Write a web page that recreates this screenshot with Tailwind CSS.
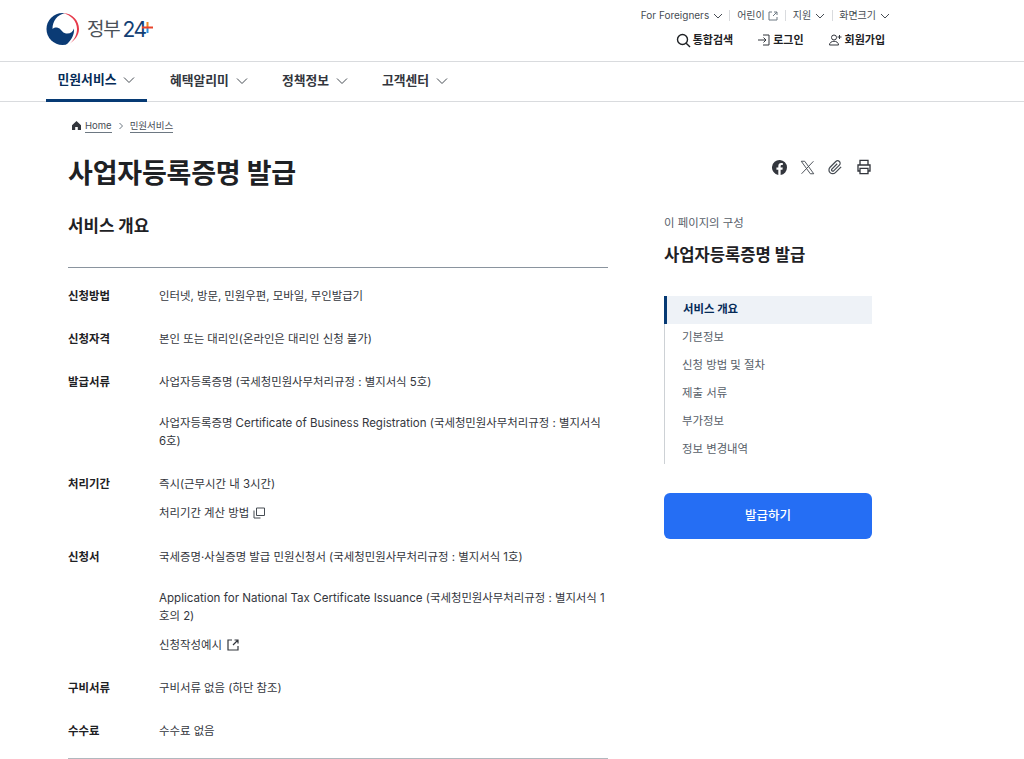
<!DOCTYPE html>
<html lang="ko">

<head>
    <meta charset="UTF-8">
    <title>사업자등록증명 발급 | 정부24</title>
    <script src="https://cdn.jsdelivr.net/npm/@tailwindcss/browser@4"></script>
</head>

<body class="bg-white text-[#1e2124] font-['Inter','Noto_Sans_CJK_KR',sans-serif] h-[759px] overflow-hidden">
    <!-- top header -->
    <header class="h-[62px] border-b border-[#d9dbde] px-[46px] flex justify-between">
        <a class="flex items-center gap-[7px] h-[58px]">
            <svg width="34" height="32" viewBox="0 0 34 32">
                <circle cx="16.500" cy="16" r="16" fill="#0b3b75" />
                <path d="M6.500 16C6.500 8 11 2 19 0H34V32H20C26 27 28.500 21 28 15.500C27 19 24 21 20 20.500C16 20 15 15 11 14.500C9 14.300 7 15 6.500 16Z" fill="#fff" />
                <path d="M17 0.200C27 0.200 33 8 33 16C33 22 29 27 24 30.500C29 26 31 21 31 16C31 8 25 2 17 0.200Z" fill="#e63a4b" />
            </svg>
            <span class="flex items-center leading-none text-[#4b5158]">
                <span class="text-[19px] tracking-[-1.200px]">정부</span>
                <span class="relative ml-[3px] text-[#123f75] text-[21px] tracking-[-1.500px]">24<svg class="absolute right-[-7px] top-[3px]" width="11" height="11" viewBox="0 0 11 11"><rect x="4.500" y="0" width="2" height="5" fill="#f08a24" /><rect x="4.500" y="5" width="2" height="6" fill="#2f8fdc" /><rect x="0" y="4.500" width="11" height="2" fill="#e8452c" /></svg></span>
            </span>
        </a>
        <div class="mr-[88px] flex flex-col items-end">
            <ul class="flex items-center h-[15px] mt-[8px] text-[10px] text-[#464c53]">
                <li class="flex items-center gap-[4px] pr-[6px]">For Foreigners
                    <svg width="10" height="10" viewBox="0 0 10 10" fill="none" stroke="#464c53"><path d="M1 3l4 4 4-4" /></svg>
                </li>
                <li class="flex items-center gap-[3px] border-l border-[#d9dbde] px-[7px] h-[11px]">어린이
                    <svg width="10" height="10" viewBox="0 0 10 10" fill="none" stroke="#6d7882"><path d="M4 1H1v8h8V6M5 5l4-4M6 1h3v3" /></svg>
                </li>
                <li class="flex items-center gap-[4px] border-l border-[#d9dbde] px-[7px] h-[11px]">지원
                    <svg width="10" height="10" viewBox="0 0 10 10" fill="none" stroke="#464c53"><path d="M1 3l4 4 4-4" /></svg>
                </li>
                <li class="flex items-center gap-[4px] border-l border-[#d9dbde] pl-[6px] h-[11px]">화면크기
                    <svg width="10" height="10" viewBox="0 0 10 10" fill="none" stroke="#464c53"><path d="M1 3l4 4 4-4" /></svg>
                </li>
            </ul>
            <ul class="flex items-center gap-[25px] mt-[9px] mr-[5px] text-[11px] font-bold text-[#1e2124]">
                <li class="flex items-center gap-[2px]">
                    <svg width="15" height="15" viewBox="0 0 15 15" fill="none" stroke="#1e2124" stroke-width="1.400"><circle cx="6.500" cy="6.500" r="5" /><path d="M10.200 10.200l3.800 3.800" /></svg>
                    통합검색
                </li>
                <li class="flex items-center gap-[3px]">
                    <svg width="12" height="12" viewBox="0 0 12 12" fill="none" stroke="#33363d"><path d="M5 1h6v10H5M0 6h8M5.500 3.500L8 6 5.500 8.500" /></svg>
                    로그인
                </li>
                <li class="flex items-center gap-[3px]">
                    <svg width="13" height="12" viewBox="0 0 13 12" fill="none" stroke="#33363d"><circle cx="5" cy="3.500" r="2.500" /><path d="M0.500 11c0-5 9-5 9 0zM10.500 1v4M8.500 3h4" /></svg>
                    회원가입
                </li>
            </ul>
        </div>
    </header>

    <!-- main nav -->
    <nav class="h-[40px] border-b border-[#d9dbde] px-[46px] flex text-[12.800px] font-semibold text-[#33363d]">
        <a class="h-[40px] w-[101px] border-b-[3px] border-[#063a74] flex items-center justify-center gap-[7px] text-[#052b57] pb-[1px]">민원서비스
            <svg width="12" height="12" viewBox="0 0 12 12" fill="none" stroke="#464c53"><path d="M1 3.500l5 5 5-5" /></svg>
        </a>
        <a class="flex items-center gap-[7px] ml-[23px] pb-[1px]">혜택알리미
            <svg width="12" height="12" viewBox="0 0 12 12" fill="none" stroke="#464c53"><path d="M1 3.500l5 5 5-5" /></svg>
        </a>
        <a class="flex items-center gap-[7px] ml-[34px] pb-[1px]">정책정보
            <svg width="12" height="12" viewBox="0 0 12 12" fill="none" stroke="#464c53"><path d="M1 3.500l5 5 5-5" /></svg>
        </a>
        <a class="flex items-center gap-[7px] ml-[34px] pb-[1px]">고객센터
            <svg width="12" height="12" viewBox="0 0 12 12" fill="none" stroke="#464c53"><path d="M1 3.500l5 5 5-5" /></svg>
        </a>
    </nav>

    <div class="px-[68px] w-[940px]">
        <!-- breadcrumb -->
        <div class="flex items-center h-[15px] mt-[16px] ml-[4px] text-[9.500px] text-[#464c53]">
            <svg width="9" height="9" viewBox="0 0 9 9" fill="#33363d"><path d="M4.500 0L9 4.200V9H5.800V6H3.200v3H0V4.200z" /></svg>
            <a class="ml-[4px] border-b border-[#6d7882] leading-[13px]">Home</a>
            <svg class="mx-[6px]" width="6" height="8" viewBox="0 0 6 8" fill="none" stroke="#6d7882"><path d="M1.500 1l3 3-3 3" /></svg>
            <a class="border-b border-[#6d7882] leading-[13px]">민원서비스</a>
        </div>

        <!-- title -->
        <div class="flex justify-between items-center mt-[23px] h-[36px]">
            <h1 class="text-[27px] font-bold tracking-[-0.2px] text-[#1e2124] leading-[36px]">사업자등록증명 발급</h1>
            <div class="flex items-center gap-[13px] mb-[14px]">
                <svg width="15" height="15" viewBox="0 0 24 24" fill="#33363d"><path d="M24 12a12 12 0 1 0-13.900 11.900v-8.400H7.100V12h3V9.400c0-3 1.800-4.700 4.500-4.700 1.300 0 2.700.2 2.700.2v3h-1.500c-1.500 0-2 .9-2 1.900V12h3.400l-.5 3.500h-2.900v8.400A12 12 0 0 0 24 12z" /></svg>
                <svg width="15" height="15" viewBox="0 0 24 24" fill="none" stroke="#464c53" stroke-width="1.500"><path d="M2 2l14.500 20H22L7.500 2zM21.500 2L2.500 22" /></svg>
                <svg width="15" height="15" viewBox="0 0 24 24" fill="none" stroke="#464c53" stroke-width="2"><path d="M21 11l-9.200 9.200a6 6 0 0 1-8.500-8.500l9.200-9.200a4 4 0 0 1 5.700 5.700l-9.200 9.200a2 2 0 0 1-2.800-2.800l8.500-8.500" /></svg>
                <svg width="16" height="16" viewBox="0 0 24 24" fill="none" stroke="#33363d" stroke-width="2"><path d="M6 9V2h12v7M6 18H3v-9h18v9h-3M6 14h12v8H6z" /></svg>
            </div>
        </div>

        <div class="flex justify-between">
            <!-- content -->
            <main class="w-[540px]">
                <h2 class="text-[16.800px] font-bold leading-[22px] mt-[23px] pb-[30px] border-b border-[#8a949e]">서비스 개요</h2>
                <dl class="text-[11.400px] leading-[18px] text-[#33363d] border-b border-[#b1b8be] pb-[18px]">
                    <div class="flex mt-[19px]">
                        <dt class="w-[91px] font-bold text-[#1e2124]">신청방법</dt>
                        <dd>인터넷, 방문, 민원우편, 모바일, 무인발급기</dd>
                    </div>
                    <div class="flex mt-[25px]">
                        <dt class="w-[91px] font-bold text-[#1e2124]">신청자격</dt>
                        <dd>본인 또는 대리인(온라인은 대리인 신청 불가)</dd>
                    </div>
                    <div class="flex mt-[25px]">
                        <dt class="w-[91px] shrink-0 font-bold text-[#1e2124]">발급서류</dt>
                        <dd>
                            <p>사업자등록증명 (국세청민원사무처리규정 : 별지서식 5호)</p>
                            <p class="mt-[23px]">사업자등록증명 <span class="text-[11.500px]">Certificate of Business Registration</span> (국세청민원사무처리규정 : 별지서식 6호)</p>
                        </dd>
                    </div>
                    <div class="flex mt-[25px]">
                        <dt class="w-[91px] font-bold text-[#1e2124]">처리기간</dt>
                        <dd>
                            <p>즉시(근무시간 내 3시간)</p>
                            <p class="mt-[11px] flex items-center gap-[4px]">처리기간 계산 방법
                                <svg width="12" height="12" viewBox="0 0 12 12" fill="none" stroke="#464c53"><path d="M3.500 1h8v7.500h-8zM1 3.500V11h6.500" /></svg>
                            </p>
                        </dd>
                    </div>
                    <div class="flex mt-[26px]">
                        <dt class="w-[91px] shrink-0 font-bold text-[#1e2124]">신청서</dt>
                        <dd>
                            <p>국세증명·사실증명 발급 민원신청서 (국세청민원사무처리규정 : 별지서식 1호)</p>
                            <p class="mt-[23px]"><span class="text-[11.600px]">Application for National Tax Certificate Issuance</span> (국세청민원사무처리규정 : 별지서식 1호의 2)</p>
                            <p class="mt-[11px] flex items-center gap-[5px]">신청작성예시
                                <svg width="12" height="12" viewBox="0 0 12 12" fill="none" stroke="#33363d" stroke-width="1.200"><path d="M5 1H1v10h10V7M6 6l5-5M7.500 1H11v3.500" /></svg>
                            </p>
                        </dd>
                    </div>
                    <div class="flex mt-[25px]">
                        <dt class="w-[91px] font-bold text-[#1e2124]">구비서류</dt>
                        <dd>구비서류 없음 (하단 참조)</dd>
                    </div>
                    <div class="flex mt-[25px]">
                        <dt class="w-[91px] font-bold text-[#1e2124]">수수료</dt>
                        <dd>수수료 없음</dd>
                    </div>
                </dl>
            </main>

            <!-- side menu -->
            <aside class="w-[208px] mt-[24px]">
                <p class="text-[11.400px] leading-[14px] text-[#58616a]">이 페이지의 구성</p>
                <p class="text-[16.600px] font-bold leading-[22px] mt-[14px] text-[#1e2124]">사업자등록증명 발급</p>
                <ul class="mt-[30px] border-l border-[#cdd1d5] text-[11.400px] text-[#58616a] w-full">
                    <li class="h-[28px] -ml-px pl-[16px] flex items-center bg-[#eef2f7] border-l-[3px] border-[#063a74] font-bold text-[#052b57]">서비스 개요</li>
                    <li class="h-[28px] pl-[17px] flex items-center">기본정보</li>
                    <li class="h-[28px] pl-[17px] flex items-center">신청 방법 및 절차</li>
                    <li class="h-[28px] pl-[17px] flex items-center">제출 서류</li>
                    <li class="h-[28px] pl-[17px] flex items-center">부가정보</li>
                    <li class="h-[28px] pl-[17px] flex items-center">정보 변경내역</li>
                </ul>
                <a class="mt-[29px] h-[46px] rounded-[6px] bg-[#256ef4] text-white text-[12.500px] font-medium flex items-center justify-center">발급하기</a>
            </aside>
        </div>
    </div>
</body>

</html>
